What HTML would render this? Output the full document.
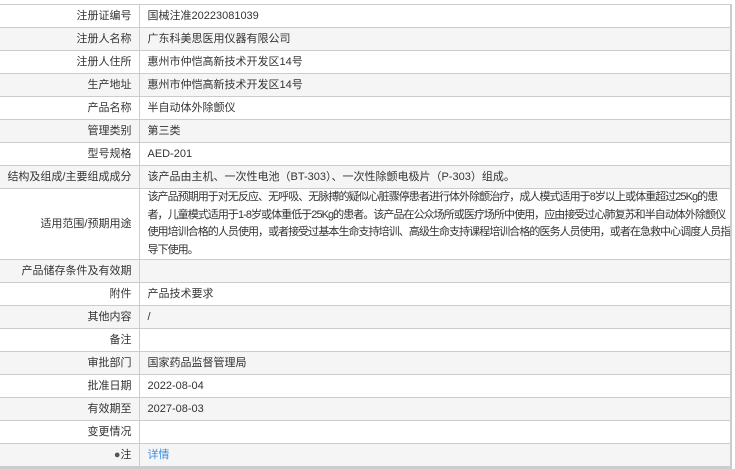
<!DOCTYPE html>
<html><head><meta charset="utf-8"><style>
html,body{margin:0;padding:0;background:#fff;width:735px;height:469px;overflow:hidden}
body{font-family:"Liberation Sans","Noto Sans CJK SC",sans-serif;font-size:11px;color:#333}
table{position:absolute;left:0;top:4px;width:732px;border-collapse:collapse;border-right:2px solid #ccc;table-layout:fixed}
td{border-top:1px solid #ccc;border-bottom:1px solid #ccc;height:22px;padding:0 6px 0 8px;line-height:18px;vertical-align:middle;overflow:hidden}
td.l{text-align:right;border-right:1px solid #ccc;white-space:nowrap;padding:0 7px 0 0}
tr:nth-child(even) td{background:#f5f5f5}
tr:last-child td{border-bottom:3px solid #ccc}
a{color:#3a8ee6;text-decoration:none}
</style></head><body>
<table>
<colgroup><col style="width:139px"><col></colgroup>
<tr><td class="l">注册证编号</td><td>国械注准20223081039</td></tr>
<tr><td class="l">注册人名称</td><td>广东科美思医用仪器有限公司</td></tr>
<tr><td class="l">注册人住所</td><td>惠州市仲恺高新技术开发区14号</td></tr>
<tr><td class="l">生产地址</td><td>惠州市仲恺高新技术开发区14号</td></tr>
<tr><td class="l">产品名称</td><td>半自动体外除颤仪</td></tr>
<tr><td class="l">管理类别</td><td>第三类</td></tr>
<tr><td class="l">型号规格</td><td>AED-201</td></tr>
<tr><td class="l">结构及组成/主要组成成分</td><td>该产品由主机、一次性电池（BT-303）、一次性除颤电极片（P-303）组成。</td></tr>
<tr><td class="l" style="height:70px">适用范围/预期用途</td><td style="line-height:17.5px;letter-spacing:-0.95px;white-space:nowrap;padding-right:0">该产品预期用于对无反应、无呼吸、无脉搏的疑似心脏骤停患者进行体外除颤治疗，成人模式适用于8岁以上或体重超过25Kg的患<br>者，儿童模式适用于1-8岁或体重低于25Kg的患者。该产品在公众场所或医疗场所中使用，应由接受过心肺复苏和半自动体外除颤仪<br>使用培训合格的人员使用，或者接受过基本生命支持培训、高级生命支持课程培训合格的医务人员使用，或者在急救中心调度人员指<br>导下使用。</td></tr>
<tr><td class="l">产品储存条件及有效期</td><td></td></tr>
<tr><td class="l">附件</td><td>产品技术要求</td></tr>
<tr><td class="l">其他内容</td><td>/</td></tr>
<tr><td class="l">备注</td><td></td></tr>
<tr><td class="l">审批部门</td><td>国家药品监督管理局</td></tr>
<tr><td class="l">批准日期</td><td>2022-08-04</td></tr>
<tr><td class="l">有效期至</td><td>2027-08-03</td></tr>
<tr><td class="l">变更情况</td><td></td></tr>
<tr><td class="l"><span style="color:#555">●</span>注</td><td><a>详情</a></td></tr>
</table>
</body></html>
